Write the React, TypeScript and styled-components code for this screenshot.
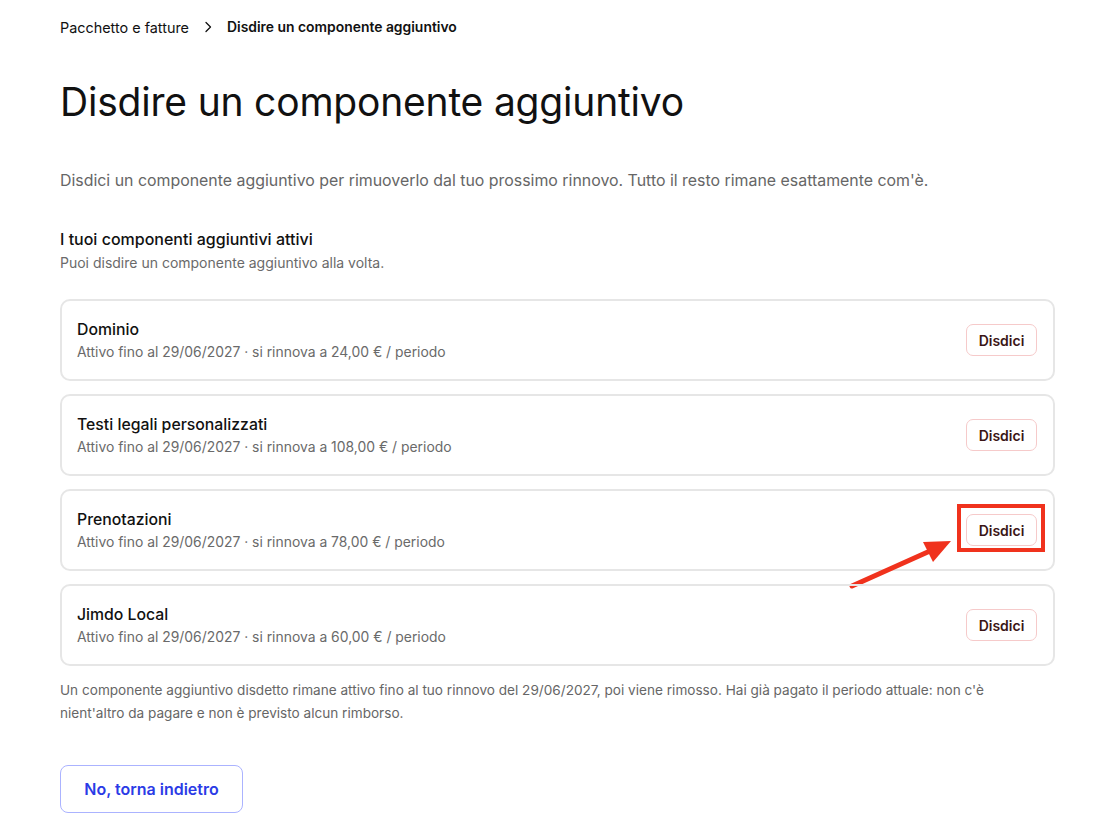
import React from "react";
import styled, { createGlobalStyle } from "styled-components";

const Global = createGlobalStyle`
  html, body { margin: 0; padding: 0; background: #ffffff; }
  body { font-family: "Inter", "Noto Sans", sans-serif; color: #111111; }
  * { box-sizing: border-box; }
`;

const Page = styled.main`
  padding: 17px 60px 10px 60px;
  display: flex;
  flex-direction: column;
`;

const Crumbs = styled.nav`
  display: flex;
  align-items: center;
  gap: 14px;
  font-size: 14.4px;
  height: 20px;
  color: #111;
`;

const CrumbLink = styled.span`
  font-weight: 400;
`;

const CrumbCurrent = styled.span`
  font-weight: 600;
  font-size: 13.9px;
`;

const Title = styled.h1`
  margin: 41px 0 0 0;
  font-size: 39px;
  line-height: 48px;
  font-weight: 400;
  letter-spacing: -0.2px;
`;

const Lead = styled.p`
  margin: 44px 0 0 0;
  font-size: 15.9px;
  line-height: 22px;
  color: #666;
`;

const SectionTitle = styled.h2`
  margin: 36px 0 0 0;
  font-size: 16px;
  line-height: 22px;
  font-weight: 500;
  color: #111;
`;

const SectionHint = styled.p`
  margin: 3px 0 0 0;
  font-size: 14px;
  line-height: 20px;
  color: #6a6a6a;
`;

const List = styled.div`
  margin-top: 26px;
  display: flex;
  flex-direction: column;
  gap: 13px;
`;

const Card = styled.div`
  position: relative;
  height: 82px;
  border: 2px solid #e6e6e6;
  border-radius: 10px;
  padding: 0 16px 0 15px;
  display: flex;
  align-items: center;
  justify-content: space-between;
`;

const CardText = styled.div`
  display: flex;
  flex-direction: column;
  gap: 2px;
`;

const CardTitle = styled.div`
  font-size: 15.8px;
  line-height: 21px;
  font-weight: 500;
  color: #111;
`;

const CardMeta = styled.div`
  font-size: 13.9px;
  line-height: 20px;
  color: #6a6a6a;
`;

const CancelButton = styled.button`
  font-family: inherit;
  font-size: 14px;
  font-weight: 600;
  color: #3b1616;
  background: #fff;
  border: 1px solid #f6caca;
  border-radius: 7px;
  width: 71px;
  height: 32px;
  cursor: pointer;
`;

const Highlight = styled.div`
  position: absolute;
  right: 8px;
  top: 13px;
  width: 88px;
  height: 48px;
  border: 4px solid #f0321d;
  pointer-events: none;
`;

const Arrow = styled.svg`
  position: absolute;
  left: 780px;
  top: 40px;
  pointer-events: none;
  overflow: visible;
`;

const Note = styled.p`
  margin: 13px 0 0 0;
  font-size: 13.6px;
  line-height: 23px;
  color: #666;
  max-width: 985px;
`;

const BackButton = styled.button`
  margin-top: 40px;
  align-self: flex-start;
  font-family: inherit;
  font-size: 16px;
  font-weight: 600;
  color: #2b3be6;
  background: #fff;
  border: 1px solid #abb3ff;
  border-radius: 8px;
  width: 183px;
  height: 48px;
  cursor: pointer;
`;

const Chevron = () => (
  <svg width="10" height="12" viewBox="0 0 10 12" fill="none">
    <path d="M3 1.5 L7.5 6 L3 10.5" stroke="#111" strokeWidth="1.3" strokeLinecap="round" strokeLinejoin="round" />
  </svg>
);

const addons = [
  { name: "Dominio", price: "24,00" },
  { name: "Testi legali personalizzati", price: "108,00" },
  { name: "Prenotazioni", price: "78,00", highlighted: true },
  { name: "Jimdo Local", price: "60,00" },
];

export default function App() {
  return (
    <>
      <Global />
      <Page>
        <Crumbs>
          <CrumbLink>Pacchetto e fatture</CrumbLink>
          <Chevron />
          <CrumbCurrent>Disdire un componente aggiuntivo</CrumbCurrent>
        </Crumbs>
        <Title>Disdire un componente aggiuntivo</Title>
        <Lead>
          Disdici un componente aggiuntivo per rimuoverlo dal tuo prossimo rinnovo. Tutto il resto rimane esattamente com'è.
        </Lead>
        <SectionTitle>I tuoi componenti aggiuntivi attivi</SectionTitle>
        <SectionHint>Puoi disdire un componente aggiuntivo alla volta.</SectionHint>
        <List>
          {addons.map((a) => (
            <Card key={a.name}>
              <CardText>
                <CardTitle>{a.name}</CardTitle>
                <CardMeta>
                  Attivo fino al 29/06/2027 · si rinnova a {a.price} € / periodo
                </CardMeta>
              </CardText>
              <CancelButton>Disdici</CancelButton>
              {a.highlighted && (
                <>
                  <Highlight />
                  <Arrow width="120" height="65" viewBox="0 0 120 65">
                    <line x1="10" y1="55" x2="88" y2="20" stroke="#f0321d" strokeWidth="5" strokeLinecap="round" />
                    <polygon points="109,10 81,11 91,31" fill="#f0321d" />
                  </Arrow>
                </>
              )}
            </Card>
          ))}
        </List>
        <Note>
          Un componente aggiuntivo disdetto rimane attivo fino al tuo rinnovo del 29/06/2027, poi viene rimosso. Hai già pagato il periodo attuale: non c'è nient'altro da pagare e non è previsto alcun rimborso.
        </Note>
        <BackButton>No, torna indietro</BackButton>
      </Page>
    </>
  );
}
